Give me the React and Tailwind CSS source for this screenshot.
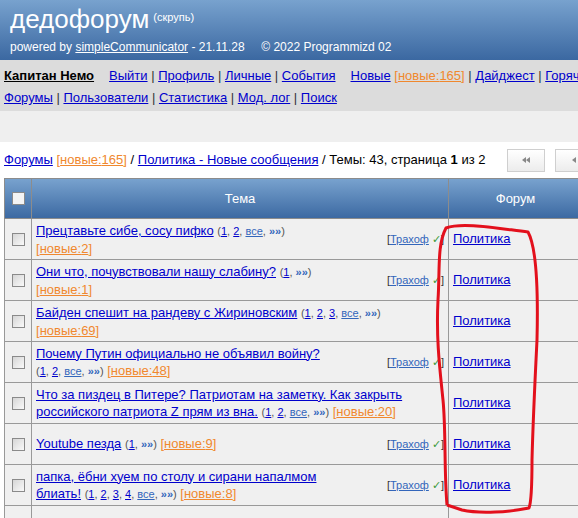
import React from "react";

const link = "text-[#0000cc] underline";
const sep = <span className="text-[#333]"> | </span>;

const New = ({ n }) => (
  <span className="text-[#f0882e]">
    [<span className="underline">новые:{n}</span>]
  </span>
);

const Pages = ({ items }) => (
  <span className="text-[11px] text-[#555]">
    (
    {items.map((p, i) => (
      <span key={i}>
        {i > 0 && ", "}
        {p === "»»" ? (
          <span className="text-[#3366bb] font-bold">»»</span>
        ) : p === "все" ? (
          <span className="text-[#3366bb] underline">все</span>
        ) : (
          <span className="text-[#0000cc] underline">{p}</span>
        )}
      </span>
    ))}
    )
  </span>
);

const Author = () => (
  <span className="text-[11px] text-[#333] whitespace-nowrap">
    [<span className="text-[#3366bb] underline">Трахоф</span>{" "}
    <span className="text-[#3a9a3a]">✓</span>]
  </span>
);

const Box = ({ light }) => (
  <div
    className={`mx-auto w-[13px] h-[13px] border border-[#8a8a8a] ${
      light ? "bg-[#f4f4f4]" : "bg-linear-to-br from-[#d6d6d6] to-[#fafafa]"
    }`}
  />
);

const rows = [
  {
    body: (
      <>
        <span className={link}>Прецтавьте сибе, сосу пифко</span> <Pages items={["1", "2", "все", "»»"]} />
        <br />
        <New n="2" />
      </>
    ),
    author: true,
  },
  {
    body: (
      <>
        <span className={link}>Они что, почувствовали нашу слабину?</span> <Pages items={["1", "»»"]} />
        <br />
        <New n="1" />
      </>
    ),
    author: true,
  },
  {
    body: (
      <>
        <span className={link}>Байден спешит на рандеву с Жириновским</span>{" "}
        <Pages items={["1", "2", "3", "все", "»»"]} />
        <br />
        <New n="69" />
      </>
    ),
  },
  {
    body: (
      <>
        <span className={link}>Почему Путин официально не объявил войну?</span>
        <br />
        <Pages items={["1", "2", "все", "»»"]} /> <New n="48" />
      </>
    ),
    author: true,
  },
  {
    body: (
      <>
        <span className={link}>
          Что за пиздец в Питере? Патриотам на заметку. Как закрыть
          <br />
          российского патриота Z прям из вна.
        </span>{" "}
        <Pages items={["1", "2", "все", "»»"]} /> <New n="20" />
      </>
    ),
  },
  {
    body: (
      <>
        <span className={link}>Youtube пезда</span> <Pages items={["1", "»»"]} /> <New n="9" />
      </>
    ),
    author: true,
  },
  {
    body: (
      <>
        <span className={link}>
          папка, ёбни хуем по столу и сирани напалмом
          <br />
          блиать!
        </span>{" "}
        <Pages items={["1", "2", "3", "4", "все", "»»"]} /> <New n="8" />
      </>
    ),
    author: true,
  },
];

export default function App() {
  return (
    <div className="relative w-[578px] h-[518px] overflow-hidden bg-white font-['Liberation_Sans',Arial,sans-serif] text-[13px] text-black">
      <div className="w-[800px]">
        {/* header */}
        <div className="h-[60px] bg-linear-to-b from-[#78a2ce] to-[#3b68a1] text-white pl-[10px] pt-[4px]">
          <div className="flex items-start h-[34px]">
            <span className="text-[26px] leading-[30px]">дедофорум</span>
            <span className="text-[11px] ml-[4px] mt-[5px]">(скрупь)</span>
          </div>
          <div className="text-[12px] leading-[18px] whitespace-pre">
            powered by <span className="underline">simpleCommunicator</span> - 21.11.28{"     "}© 2022 Programmizd 02
          </div>
        </div>

        {/* nav */}
        <div className="bg-[#dcdcdc] h-[51px] pl-[4px] pt-[5px] leading-[22px] whitespace-nowrap">
          <div>
            <span className="font-bold underline">Капитан Немо</span>
            <span className="inline-block w-[15px]" />
            <span className={link}>Выйти</span>
            {sep}
            <span className={link}>Профиль</span>
            {sep}
            <span className={link}>Личные</span>
            {sep}
            <span className={link}>События</span>
            <span className="inline-block w-[15px]" />
            <span className={link}>Новые</span> <New n="165" />
            {sep}
            <span className={link}>Дайджест</span>
            {sep}
            <span className={link}>Горячие</span>
          </div>
          <div>
            <span className={link}>Форумы</span>
            {sep}
            <span className={link}>Пользователи</span>
            {sep}
            <span className={link}>Статистика</span>
            {sep}
            <span className={link}>Мод. лог</span>
            {sep}
            <span className={link}>Поиск</span>
          </div>
        </div>
        <div className="bg-[#efefef] h-[31px]" />

        {/* breadcrumb */}
        <div className="h-[36px] pl-[4px] flex items-center whitespace-nowrap">
          <div className="w-[503px]">
            <span className={link}>Форумы</span> <New n="165" /> /{" "}
            <span className={link}>Политика - Новые сообщения</span> / Темы: 43, страница{" "}
            <b>1</b> из 2
          </div>
          <div className="flex gap-[10px]">
            <div className="w-[38px] h-[23px] border border-[#cfcfcf] bg-linear-to-b from-white to-[#ececec] flex items-center justify-center">
              <svg width="10" height="6" viewBox="0 0 10 6">
                <path d="M5 0 L1 3 L5 6 Z M9 0 L5 3 L9 6 Z" fill="#888" />
              </svg>
            </div>
            <div className="w-[38px] h-[23px] border border-[#cfcfcf] bg-linear-to-b from-white to-[#ececec] flex items-center justify-center">
              <svg width="6" height="6" viewBox="0 0 6 6">
                <path d="M5 0 L1 3 L5 6 Z" fill="#888" />
              </svg>
            </div>
          </div>
        </div>

        {/* table */}
        <table className="ml-[4px] border-collapse border border-[#8c8c8c]">
          <thead>
            <tr className="h-[40px] bg-linear-to-b from-[#78a2ce] to-[#3b68a1] text-white font-normal">
              <th className="w-[27px] border border-[#8c8c8c] p-0">
                <Box light />
              </th>
              <th className="w-[417px] border border-[#8c8c8c] font-normal">Тема</th>
              <th className="w-[134px] border border-[#8c8c8c] font-normal">Форум</th>
            </tr>
          </thead>
          <tbody>
            {rows.map((r, i) => (
              <tr key={i} className="h-[41px] bg-[#f0f0f0]">
                <td className="border border-[#999] p-0 align-middle">
                  <Box />
                </td>
                <td className="border border-[#999] px-[4px] py-0 align-middle">
                  <div className="flex items-center justify-between">
                    <div className="leading-[17px] whitespace-nowrap">{r.body}</div>
                    {r.author && <Author />}
                  </div>
                </td>
                <td className="border border-[#999] px-[4px] align-middle">
                  <span className={link}>Политика</span>
                </td>
              </tr>
            ))}
            <tr className="h-[41px] bg-[#f0f0f0]">
              <td className="border border-[#999]" />
              <td className="border border-[#999]" />
              <td className="border border-[#999]" />
            </tr>
          </tbody>
        </table>
      </div>

      {/* hand-drawn red circle */}
      <svg className="absolute left-0 top-0 pointer-events-none" width="578" height="518" viewBox="0 0 578 518">
        <path
          d="M447 505 C444 470 446 430 443 400 C440 370 436 340 438 300 C440 270 437 245 446 228 C462 222 495 228 528 232 C538 250 538 300 537 340 C535 380 533 420 532 460 C532 490 531 503 529 508 C510 512 480 514 462 510 L447 505"
          fill="none"
          stroke="#e3101c"
          strokeWidth="3"
          strokeLinejoin="round"
        />
      </svg>
    </div>
  );
}
